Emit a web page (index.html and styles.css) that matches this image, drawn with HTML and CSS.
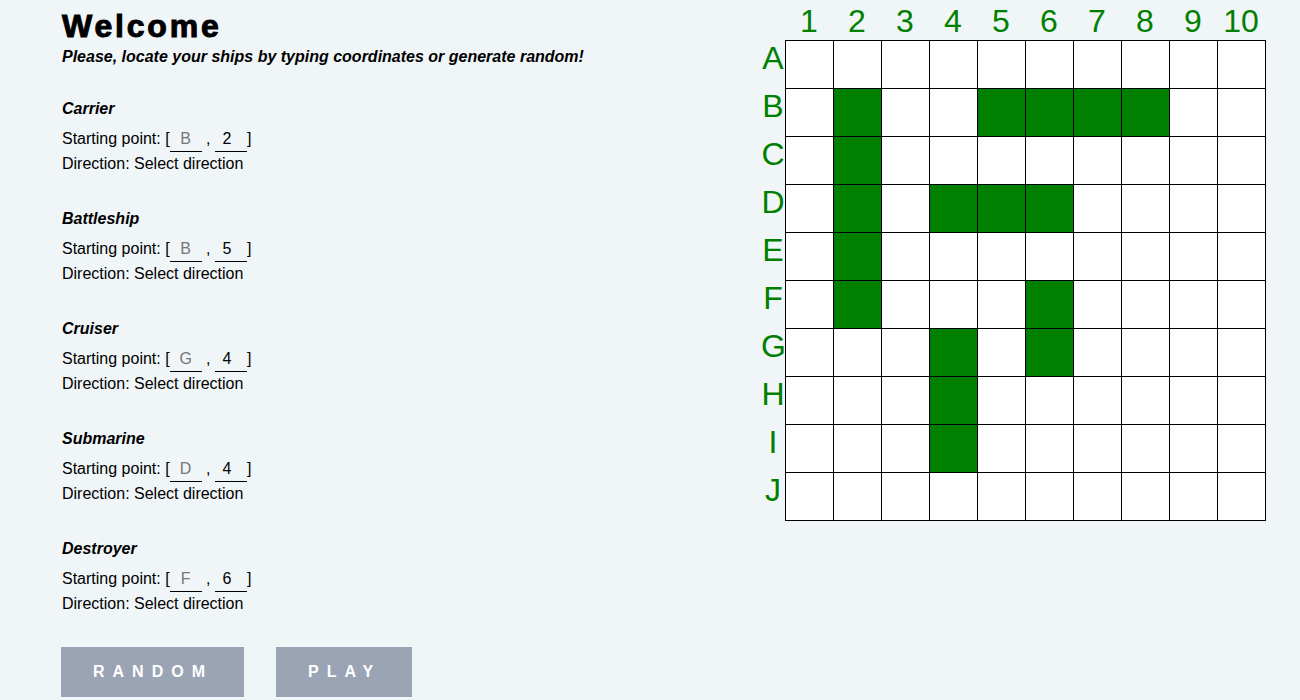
FILE: index.html
```html
<!DOCTYPE html>
<html lang="en">
<head>
<meta charset="utf-8">
<title>Battleship</title>
<link rel="stylesheet" href="styles.css">
</head>
<body>
<div class="page">
  <div class="left">
    <h1 class="title">Welcome</h1>
    <p class="subtitle">Please, locate your ships by typing coordinates or generate random!</p>

    <div class="ship">
      <div class="ship-name">Carrier</div>
      <div class="line">Starting point: [<input class="coord" placeholder="B"> , <input class="coord value" value="2">]</div>
      <div class="line">Direction: Select direction</div>
    </div>
    <div class="ship">
      <div class="ship-name">Battleship</div>
      <div class="line">Starting point: [<input class="coord" placeholder="B"> , <input class="coord value" value="5">]</div>
      <div class="line">Direction: Select direction</div>
    </div>
    <div class="ship">
      <div class="ship-name">Cruiser</div>
      <div class="line">Starting point: [<input class="coord" placeholder="G"> , <input class="coord value" value="4">]</div>
      <div class="line">Direction: Select direction</div>
    </div>
    <div class="ship">
      <div class="ship-name">Submarine</div>
      <div class="line">Starting point: [<input class="coord" placeholder="D"> , <input class="coord value" value="4">]</div>
      <div class="line">Direction: Select direction</div>
    </div>
    <div class="ship">
      <div class="ship-name">Destroyer</div>
      <div class="line">Starting point: [<input class="coord" placeholder="F"> , <input class="coord value" value="6">]</div>
      <div class="line">Direction: Select direction</div>
    </div>

    <div class="actions">
      <button class="btn">RANDOM</button>
      <button class="btn">PLAY</button>
    </div>
  </div>

  <div class="board-area">
    <div class="corner"></div>
    <div class="col-head">
      <span>1</span><span>2</span><span>3</span><span>4</span><span>5</span><span>6</span><span>7</span><span>8</span><span>9</span><span>10</span>
    </div>
    <div class="row-head">
      <span>A</span><span>B</span><span>C</span><span>D</span><span>E</span><span>F</span><span>G</span><span>H</span><span>I</span><span>J</span>
    </div>
    <div class="board">
      <span class="cell"></span><span class="cell"></span><span class="cell"></span><span class="cell"></span><span class="cell"></span><span class="cell"></span><span class="cell"></span><span class="cell"></span><span class="cell"></span><span class="cell"></span>
      <span class="cell"></span><span class="cell ship-cell"></span><span class="cell"></span><span class="cell"></span><span class="cell ship-cell"></span><span class="cell ship-cell"></span><span class="cell ship-cell"></span><span class="cell ship-cell"></span><span class="cell"></span><span class="cell"></span>
      <span class="cell"></span><span class="cell ship-cell"></span><span class="cell"></span><span class="cell"></span><span class="cell"></span><span class="cell"></span><span class="cell"></span><span class="cell"></span><span class="cell"></span><span class="cell"></span>
      <span class="cell"></span><span class="cell ship-cell"></span><span class="cell"></span><span class="cell ship-cell"></span><span class="cell ship-cell"></span><span class="cell ship-cell"></span><span class="cell"></span><span class="cell"></span><span class="cell"></span><span class="cell"></span>
      <span class="cell"></span><span class="cell ship-cell"></span><span class="cell"></span><span class="cell"></span><span class="cell"></span><span class="cell"></span><span class="cell"></span><span class="cell"></span><span class="cell"></span><span class="cell"></span>
      <span class="cell"></span><span class="cell ship-cell"></span><span class="cell"></span><span class="cell"></span><span class="cell"></span><span class="cell ship-cell"></span><span class="cell"></span><span class="cell"></span><span class="cell"></span><span class="cell"></span>
      <span class="cell"></span><span class="cell"></span><span class="cell"></span><span class="cell ship-cell"></span><span class="cell"></span><span class="cell ship-cell"></span><span class="cell"></span><span class="cell"></span><span class="cell"></span><span class="cell"></span>
      <span class="cell"></span><span class="cell"></span><span class="cell"></span><span class="cell ship-cell"></span><span class="cell"></span><span class="cell"></span><span class="cell"></span><span class="cell"></span><span class="cell"></span><span class="cell"></span>
      <span class="cell"></span><span class="cell"></span><span class="cell"></span><span class="cell ship-cell"></span><span class="cell"></span><span class="cell"></span><span class="cell"></span><span class="cell"></span><span class="cell"></span><span class="cell"></span>
      <span class="cell"></span><span class="cell"></span><span class="cell"></span><span class="cell"></span><span class="cell"></span><span class="cell"></span><span class="cell"></span><span class="cell"></span><span class="cell"></span><span class="cell"></span>
    </div>
  </div>
</div>
</body>
</html>
```
FILE: styles.css
```css
html, body {
  margin: 0;
  padding: 0;
  background: #f0f5f8;
  font-family: "Liberation Sans", Arial, sans-serif;
  color: #000;
  overflow: hidden;
}

.page {
  display: flex;
  padding-left: 62px;
  height: 700px;
}

.left {
  flex: 0 0 699px;
  padding-top: 8px;
}

.title {
  margin: 0;
  font-size: 32px;
  line-height: 37px;
  font-weight: bold;
  letter-spacing: 2.8px;
  -webkit-text-stroke: 1px #000;
}

.subtitle {
  margin: 3px 0 0;
  font-size: 16px;
  line-height: 18px;
  font-weight: bold;
  font-style: italic;
}

.ship {
  padding-top: 34px;
}

.ship-name {
  font-size: 16px;
  line-height: 18px;
  font-weight: bold;
  font-style: italic;
  margin-bottom: 8px;
}

.line {
  font-size: 16px;
  line-height: 25px;
  height: 25px;
  white-space: nowrap;
}

.coord {
  box-sizing: border-box;
  width: 32px;
  margin: 0;
  padding: 0 0 3px;
  border: none;
  border-bottom: 1px solid #000;
  background: transparent;
  font-family: inherit;
  font-size: 16px;
  line-height: 18px;
  color: #000;
  text-align: center;
  vertical-align: baseline;
  outline: none;
}

.coord.value {
  padding-right: 8px;
}

.coord::placeholder {
  color: #777;
}

.actions {
  display: flex;
  gap: 32px;
  margin-top: 31px;
  margin-left: -1px;
}

.btn {
  height: 50px;
  padding: 0 31px 0 32px;
  border: none;
  background: #9aa4b5;
  color: #fff;
  font-family: "Liberation Sans", Arial, sans-serif;
  font-size: 16px;
  font-weight: bold;
  letter-spacing: 8px;
}

.board-area {
  display: grid;
  grid-template-columns: 24px 481px;
  grid-template-rows: 40px 481px;
  color: #008000;
  font-size: 32px;
}

.col-head {
  display: flex;
}

.col-head span {
  width: 48px;
  box-sizing: border-box;
  padding-top: 3px;
  line-height: 36px;
  text-align: center;
}

.row-head {
  display: flex;
  flex-direction: column;
}

.row-head span {
  height: 48px;
  line-height: 37px;
  text-align: center;
}

.board {
  display: grid;
  grid-template-columns: repeat(10, 48px);
  grid-template-rows: repeat(10, 48px);
  border-left: 1px solid #000;
  border-top: 1px solid #000;
  background: #fff;
}

.cell {
  box-sizing: border-box;
  border-right: 1px solid #000;
  border-bottom: 1px solid #000;
  background: #fff;
}

.ship-cell {
  background: #008000;
}
```
